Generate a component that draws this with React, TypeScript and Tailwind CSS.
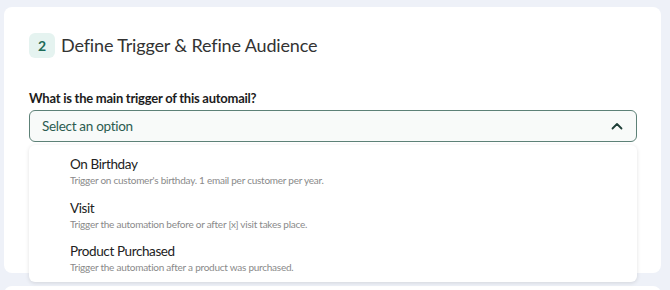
import React from 'react';

const options = [
  { title: 'On Birthday', desc: "Trigger on customer's birthday. 1 email per customer per year." },
  { title: 'Visit', desc: 'Trigger the automation before or after [x] visit takes place.' },
  { title: 'Product Purchased', desc: 'Trigger the automation after a product was purchased.' },
];

const App: React.FC = () => {
  return (
    <div className="w-[670px] h-[290px] overflow-hidden bg-[#eef1f8] px-[4px] pt-[7px] font-['Lato',sans-serif]">
      <div className="relative w-[657px] h-[266px] rounded-lg bg-white px-[25px] pt-[25px]">
        <header className="flex items-center gap-[6px]">
          <div className="flex h-[25px] w-[26px] items-center justify-center rounded-md bg-[#e5f3f0] text-[14px] font-bold text-[#1d6b58]">
            2
          </div>
          <h2 className="text-[18px] tracking-[-0.15px] text-[#333]">Define Trigger &amp; Refine Audience</h2>
        </header>

        <label className="mt-[30px] block text-[13px] font-bold leading-[18px] tracking-[-0.25px] text-[#1c1c1c]">
          What is the main trigger of this automail?
        </label>
        <button className="mt-[3px] flex h-[32px] w-[608px] items-center justify-between rounded-md border border-[#5d8177] bg-[#f8faf9] pl-[12px] pr-[13px] text-[13.5px] tracking-[-0.3px] text-[#2c5c50]">
          Select an option
          <svg width="12" height="8" viewBox="0 0 12 8" fill="none">
            <path d="M1.5 6.5L6 2l4.5 4.5" stroke="#1f3f38" strokeWidth="1.8" strokeLinecap="round" strokeLinejoin="round" />
          </svg>
        </button>

        <div className="absolute left-[25px] top-[138px] z-10 w-[608px] h-[137px] rounded-md bg-white pt-[10px] shadow-[0_1px_4px_rgba(0,0,0,0.12)]">
          {options.map((o) => (
            <div key={o.title} className="pl-[41px] h-[43.5px]">
              <div className="text-[13.5px] leading-[18px] tracking-[-0.4px] text-[#222]">{o.title}</div>
              <div className="text-[10px] leading-[14px] tracking-[-0.25px] text-[#8a8a8a]">{o.desc}</div>
            </div>
          ))}
        </div>
      </div>
      <div className="mt-[13px] h-[20px] w-[657px] rounded-lg bg-white" />
    </div>
  );
};

export default App;
